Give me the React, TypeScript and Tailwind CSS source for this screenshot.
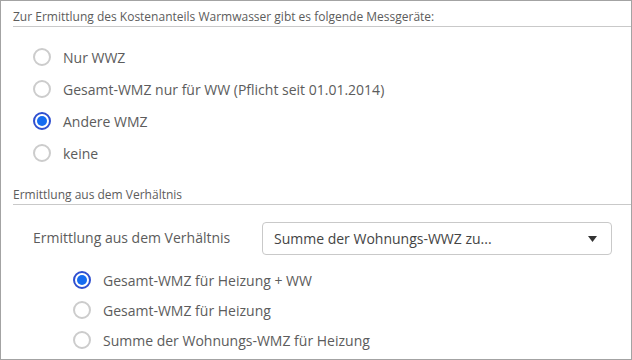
import { useState } from "react";

type RadioProps = {
  label: string;
  checked: boolean;
  onSelect: () => void;
  rowClass: string;
};

function Radio(props: RadioProps) {
  const { label, checked, onSelect, rowClass } = props;
  return (
    <div className={`flex flex-row items-center gap-[12px] cursor-pointer ${rowClass}`} onClick={onSelect}>
      {checked ? (
        <span className="flex items-center justify-center w-[18px] h-[18px] rounded-full border-2 border-[#2f4fcf] bg-white">
          <span className="w-[10px] h-[10px] rounded-full bg-[#166cf0]" />
        </span>
      ) : (
        <span className="w-[18px] h-[18px] rounded-full border-2 border-[#cccccc] bg-white" />
      )}
      <span className="text-[14px] text-[#5c5c5c]">{label}</span>
    </div>
  );
}

const devices = [
  "Nur WWZ",
  "Gesamt-WMZ nur für WW (Pflicht seit 01.01.2014)",
  "Andere WMZ",
  "keine",
];

const ratios = [
  "Gesamt-WMZ für Heizung + WW",
  "Gesamt-WMZ für Heizung",
  "Summe der Wohnungs-WMZ für Heizung",
];

function App() {
  const [device, setDevice] = useState(2);
  const [ratio, setRatio] = useState(0);

  return (
    <div
      className="w-[632px] h-[360px] border border-[#a3a3a3] bg-white overflow-hidden"
      style={{ fontFamily: '"Open Sans", sans-serif' }}
    >
      <div className="ml-[12px] pt-[7px] pb-[1px] border-b border-[#c9c9c9] text-[12px] leading-[17px] text-[#5c5c5c]">
        Zur Ermittlung des Kostenanteils Warmwasser gibt es folgende Messgeräte:
      </div>

      <div className="flex flex-col mt-[14px] pl-[32px]">
        {devices.map((d, i) => (
          <Radio
            key={d}
            label={d}
            checked={device === i}
            onSelect={() => setDevice(i)}
            rowClass="h-[32px]"
          />
        ))}
      </div>

      <div className="ml-[12px] mt-[17px] pb-[1px] border-b border-[#c9c9c9] text-[12px] leading-[17px] text-[#5c5c5c]">
        Ermittlung aus dem Verhältnis
      </div>

      <div className="flex flex-row items-center mt-[17px] pl-[32px]">
        <span className="w-[229px] text-[14px] text-[#5c5c5c] -mt-[3px]">Ermittlung aus dem Verhältnis</span>
        <div className="flex flex-row items-center justify-between w-[350px] h-[33px] border border-[#c9c9c9] rounded-[4px] pl-[11px] pr-[14px]">
          <span className="text-[14px] text-[#444444]">Summe der Wohnungs-WWZ zu...</span>
          <svg width="9" height="6" viewBox="0 0 9 6">
            <path d="M0 0 H9 L4.5 6 Z" fill="#333333" />
          </svg>
        </div>
      </div>

      <div className="flex flex-col mt-[10px] pl-[72px]">
        {ratios.map((r, i) => (
          <Radio
            key={r}
            label={r}
            checked={ratio === i}
            onSelect={() => setRatio(i)}
            rowClass="h-[30px]"
          />
        ))}
      </div>
    </div>
  );
}

export default App;
